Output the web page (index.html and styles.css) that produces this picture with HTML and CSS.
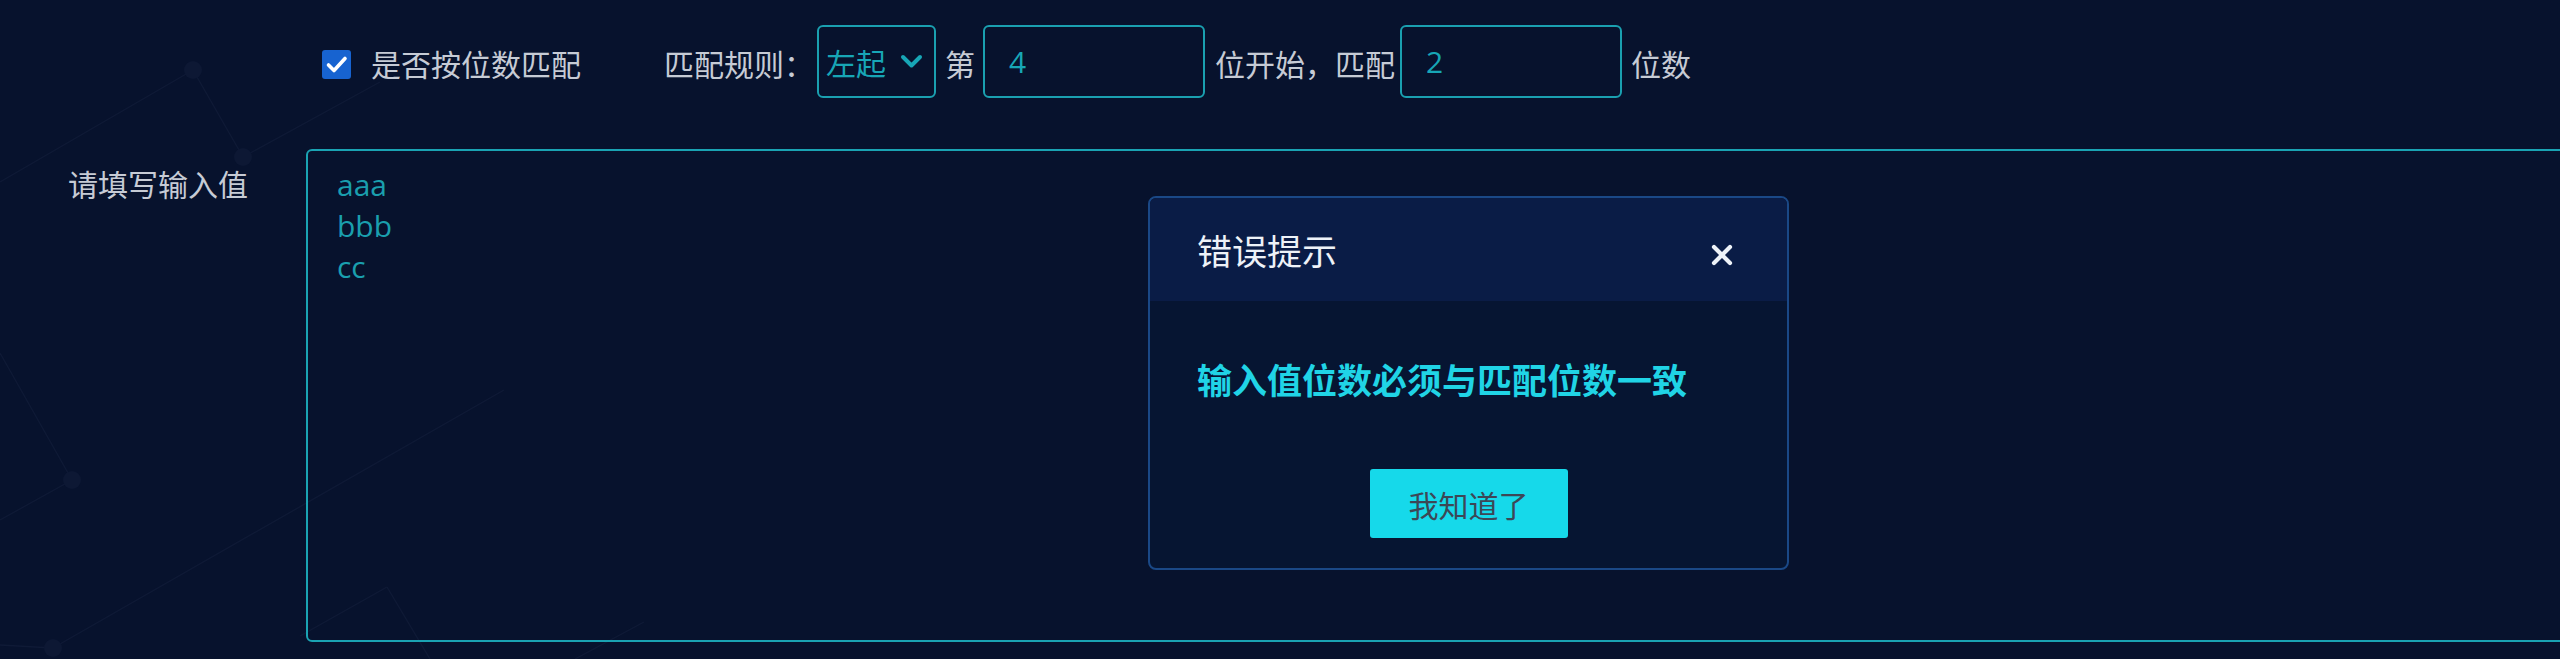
FILE: index.html
```html
<!DOCTYPE html>
<html lang="zh-CN">
<head>
<meta charset="utf-8">
<title>匹配设置</title>
<link rel="stylesheet" href="styles.css">
</head>
<body>
<div class="page">
  <svg class="bg-net" width="2560" height="659" viewBox="0 0 2560 659">
    <g class="net-lines">
      <line x1="0" y1="182" x2="193" y2="70"/>
      <line x1="193" y1="70" x2="243" y2="157"/>
      <line x1="243" y1="157" x2="380" y2="82"/>
      <line x1="0" y1="353" x2="72" y2="480"/>
      <line x1="72" y1="480" x2="0" y2="520"/>
      <line x1="0" y1="645" x2="53" y2="648"/>
      <line x1="53" y1="648" x2="504" y2="390"/>
      <line x1="387" y1="587" x2="300" y2="636"/>
      <line x1="387" y1="587" x2="430" y2="659"/>
      <line x1="644" y1="622" x2="575" y2="659"/>
    </g>
    <g class="net-dots">
      <circle cx="193" cy="70" r="9"/>
      <circle cx="243" cy="157" r="9"/>
      <circle cx="72" cy="480" r="9"/>
      <circle cx="53" cy="648" r="9"/>
    </g>
  </svg>

  <div class="rule-row">
    <label class="check-item">
      <span class="checkbox">
        <svg width="29" height="29" viewBox="0 0 29 29"><path d="M6.5 15 L12 20.5 L23 8.5" fill="none" stroke="#ffffff" stroke-width="3.6" stroke-linecap="round" stroke-linejoin="round"/></svg>
      </span>
      <span class="cjk check-label">是否按位数匹配</span>
    </label>
    <span class="cjk rule-label">匹配规则：</span>
    <div class="select">
      <span class="cjk">左起</span>
      <svg class="chevron" width="23" height="15" viewBox="0 0 23 15"><path d="M3 3 L11.5 11.5 L20 3" fill="none" stroke="#17a6b6" stroke-width="4" stroke-linecap="round" stroke-linejoin="round"/></svg>
    </div>
    <span class="cjk txt-di">第</span>
    <div class="num-input start-input">4</div>
    <span class="cjk txt-start">位开始，匹配</span>
    <div class="num-input count-input">2</div>
    <span class="cjk txt-count">位数</span>
  </div>

  <div class="input-row">
    <div class="cjk field-label">请填写输入值</div>
    <div class="textarea">aaa<br>bbb<br>cc</div>
  </div>

  <div class="dialog">
    <div class="dialog-head">
      <span class="cjk dialog-title">错误提示</span>
      <svg class="dialog-close" width="22" height="22" viewBox="0 0 22 22"><path d="M3 3 L19 19 M19 3 L3 19" stroke="#eef2f8" stroke-width="4.2" stroke-linecap="round"/></svg>
    </div>
    <div class="dialog-body">
      <div class="cjk dialog-msg">输入值位数必须与匹配位数一致</div>
      <div class="cjk dialog-btn">我知道了</div>
    </div>
  </div>
</div>
</body>
</html>
```

FILE: styles.css
```css
html, body {
  margin: 0;
  padding: 0;
}

body {
  background: #07122d;
  overflow: hidden;
  font-family: "Open Sans", "Noto Sans CJK SC", sans-serif;
}

.cjk {
  font-family: "Noto Sans CJK SC", "Open Sans", sans-serif;
}

.page {
  position: relative;
  width: 2560px;
  height: 659px;
  padding-top: 25px;
  box-sizing: border-box;
  overflow: hidden;
}

.bg-net {
  position: absolute;
  left: 0;
  top: 0;
  z-index: 0;
}

.net-lines line {
  stroke: #0f1a36;
  stroke-width: 1.3;
}

.net-dots circle {
  fill: #0d1834;
}

/* ---------- first row ---------- */
.rule-row {
  position: relative;
  z-index: 1;
  display: flex;
  align-items: center;
  height: 73px;
  padding-left: 322px;
  font-size: 30px;
  line-height: 40px;
  color: #c6cbd5;
}

.check-item {
  display: flex;
  align-items: center;
}

.checkbox {
  display: block;
  width: 29px;
  height: 29px;
  border-radius: 3px;
  background: #1763d0;
  margin-top: 6px;
}

.checkbox svg {
  display: block;
}

.check-label {
  margin-left: 20px;
  margin-top: 3px;
}

.rule-label {
  margin-left: 83px;
  margin-top: 3px;
}

.select {
  margin-left: 3px;
  box-sizing: border-box;
  width: 119px;
  height: 73px;
  border: 2px solid #1aa0b0;
  border-radius: 6px;
  display: flex;
  align-items: center;
  padding-left: 7px;
  color: #17a6b6;
}

.chevron {
  display: block;
  margin-left: 14px;
}

.txt-di {
  margin-left: 9px;
  margin-top: 3px;
}

.num-input {
  box-sizing: border-box;
  width: 222px;
  height: 73px;
  border: 2px solid #1aa0b0;
  border-radius: 6px;
  display: flex;
  align-items: center;
  padding-left: 24px;
  color: #17a6b6;
  font-size: 30px;
}

.start-input {
  margin-left: 8px;
}

.txt-start {
  margin-left: 10px;
  margin-top: 3px;
}

.count-input {
  margin-left: 5px;
}

.txt-count {
  margin-left: 9px;
  margin-top: 3px;
}

/* ---------- second row ---------- */
.input-row {
  position: relative;
  z-index: 1;
  display: flex;
  align-items: flex-start;
  margin-top: 51px;
  padding-left: 68px;
}

.field-label {
  width: 180px;
  margin-right: 58px;
  margin-top: 14px;
  font-size: 30px;
  line-height: 40px;
  color: #c6cbd5;
  white-space: nowrap;
}

.textarea {
  flex: none;
  box-sizing: border-box;
  width: 2400px;
  height: 493px;
  border: 2px solid #1aa3b3;
  border-radius: 6px;
  padding: 13px 29px;
  font-size: 30px;
  line-height: 41px;
  color: #1a9fae;
}

/* ---------- dialog ---------- */
.dialog {
  position: absolute;
  z-index: 2;
  left: 1148px;
  top: 196px;
  width: 641px;
  height: 374px;
  box-sizing: border-box;
  border: 2px solid #1a4886;
  border-radius: 8px;
  background: #061532;
  overflow: hidden;
  display: flex;
  flex-direction: column;
}

.dialog-head {
  height: 103px;
  flex: none;
  background: #0a1c46;
  display: flex;
  align-items: center;
  justify-content: space-between;
  padding: 0 54px 0 47px;
}

.dialog-title {
  font-size: 35px;
  line-height: 44px;
  color: #eef2f8;
}

.dialog-close {
  display: block;
  margin-top: 11px;
}

.dialog-body {
  display: flex;
  flex-direction: column;
  padding: 53px 47px 0;
}

.dialog-msg {
  font-size: 35px;
  line-height: 50px;
  font-weight: 700;
  color: #20d4e6;
  white-space: nowrap;
}

.dialog-btn {
  align-self: center;
  margin-top: 65px;
  width: 198px;
  height: 69px;
  border-radius: 3px;
  background: #16d9ea;
  color: #3d4756;
  font-size: 30px;
  display: flex;
  align-items: center;
  justify-content: center;
}
```
